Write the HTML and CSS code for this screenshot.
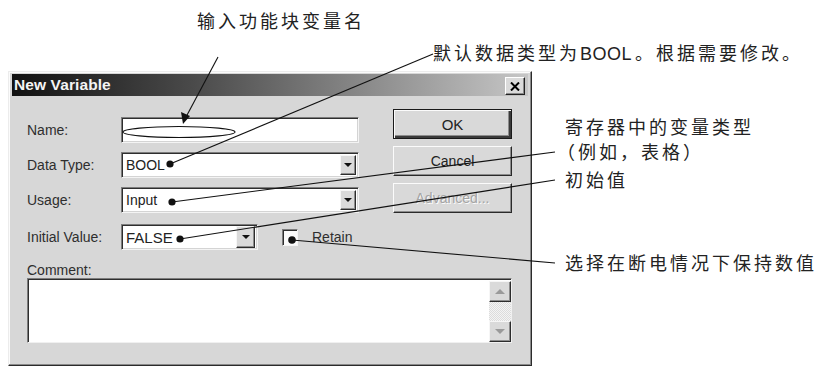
FILE: index.html
```html
<!DOCTYPE html>
<html lang="zh">
<head>
<meta charset="utf-8">
<title>New Variable</title>
<link rel="stylesheet" href="styles.css">
</head>
<body>
<div class="figure">
  <div class="callout c-name">输入功能块变量名</div>
  <div class="callout c-type">默认数据类型为<span class="latin">BOOL</span>。根据需要修改。</div>
  <div class="callout c-usage">寄存器中的变量类型<br><span class="paren">（例如，表格）</span></div>
  <div class="callout c-init">初始值</div>
  <div class="callout c-retain">选择在断电情况下保持数值</div>

  <div class="dialog">
    <div class="titlebar">
      <span class="title">New Variable</span>
      <span class="close">
        <svg width="10" height="9" viewBox="0 0 10 9"><path d="M1 0.5 L9 8.5 M9 0.5 L1 8.5" stroke="#000" stroke-width="2"/></svg>
      </span>
    </div>
    <div class="body">
      <div class="form">
        <div class="row">
          <span class="label">Name:</span>
          <div class="field wide"></div>
        </div>
        <div class="row">
          <span class="label">Data Type:</span>
          <div class="field wide combo"><span class="val">BOOL</span><span class="drop"><i class="tri"></i></span></div>
        </div>
        <div class="row">
          <span class="label">Usage:</span>
          <div class="field wide combo"><span class="val">Input</span><span class="drop"><i class="tri"></i></span></div>
        </div>
        <div class="row last">
          <span class="label">Initial Value:</span>
          <div class="field short combo"><span class="val big">FALSE</span><span class="drop"><i class="tri"></i></span></div>
          <span class="check"></span>
          <span class="check-label">Retain</span>
        </div>
      </div>
      <div class="buttons">
        <div class="btn default"><span>OK</span></div>
        <div class="btn"><span>Cancel</span></div>
        <div class="btn disabled"><span>Advanced...</span></div>
      </div>
    </div>
    <div class="comment">
      <div class="label">Comment:</div>
      <div class="textarea">
        <div class="scrollbar">
          <span class="sbtn"><i class="tri up"></i></span>
          <span class="track"></span>
          <span class="sbtn"><i class="tri dis"></i></span>
        </div>
      </div>
    </div>
  </div>

  <svg class="leaders" width="832" height="370" viewBox="0 0 832 370">
    <g stroke="#111" stroke-width="1.1" fill="none">
      <line x1="218" y1="57" x2="186" y2="117"/>
      <ellipse cx="179" cy="132" rx="56" ry="5.5"/>
      <polyline points="170,164 433,54"/>
      <line x1="172" y1="202" x2="555" y2="152"/>
      <line x1="180" y1="239" x2="555" y2="180"/>
      <line x1="292" y1="240" x2="555" y2="263"/>
    </g>
    <g fill="#111">
      <polygon points="183,124 181,112 190,116"/>
      <circle cx="170" cy="164" r="3.6"/>
      <circle cx="172" cy="202" r="3.6"/>
      <circle cx="180" cy="239" r="3.6"/>
      <circle cx="292" cy="240" r="3.8"/>
    </g>
  </svg>
</div>
</body>
</html>
```

FILE: styles.css
```css
html, body {
  margin: 0;
  padding: 0;
  background: #ffffff;
}

.figure {
  position: relative;
  width: 832px;
  height: 370px;
  overflow: hidden;
  padding-top: 71px;
  box-sizing: border-box;
}

/* Callout labels on the annotated figure */
.callout {
  position: absolute;
  font-family: "Noto Sans CJK SC", "Noto Sans", sans-serif;
  font-size: 18px;
  line-height: 25px;
  letter-spacing: 3px;
  color: #222222;
  white-space: nowrap;
}
.callout .latin {
  font-family: "Liberation Sans", Arial, sans-serif;
  letter-spacing: 0.5px;
  margin-right: 3px;
}
.c-name { left: 197px; top: 8px; }
.c-type { left: 433px; top: 40px; }
.c-usage { left: 565px; top: 114px; }
.c-usage .paren { margin-left: -8px; }
.c-init { left: 565px; top: 167px; }
.c-retain { left: 565px; top: 250px; }

.leaders {
  position: absolute;
  left: 0;
  top: 0;
  pointer-events: none;
}

/* Dialog */
.dialog {
  margin-left: 8px;
  width: 524px;
  height: 295px;
  box-sizing: border-box;
  background: #d7d7d7;
  border: 1px solid;
  border-color: #ececec #2b2b2b #2b2b2b #ececec;
  box-shadow: inset -1px -1px 0 #8a8a8a, inset 1px 1px 0 #fbfbfb;
  padding: 2px 3px 3px 3px;
  font-family: "Liberation Sans", Arial, sans-serif;
  font-size: 14px;
  color: #2e2e2e;
}

.titlebar {
  height: 22px;
  display: flex;
  align-items: center;
  justify-content: space-between;
  background: linear-gradient(to right, #121212 0%, #4a4a4a 35%, #c6c6c6 100%);
  padding: 0 2px 0 2px;
}
.title {
  font-weight: bold;
  font-size: 15.5px;
  color: #f4f4f4;
  letter-spacing: 0.1px;
}
.close {
  width: 20px;
  height: 18px;
  box-sizing: border-box;
  background: #dadada;
  border: 1px solid;
  border-color: #ffffff #222 #222 #ffffff;
  box-shadow: inset -1px -1px 0 #8a8a8a;
  display: flex;
  align-items: center;
  justify-content: center;
  margin-right: 1px;
  margin-top: 2px;
}

.body {
  display: flex;
  padding: 13px 16px 0 15px;
  gap: 34px;
}

.form {
  padding-top: 8px;
  display: flex;
  flex-direction: column;
  gap: 9px;
}
.row {
  display: flex;
  align-items: center;
  height: 26px;
}
.row.last { margin-top: 2px; height: 26px; }

.label {
  width: 94px;
  flex: none;
  line-height: 16px;
}

.field {
  height: 26px;
  box-sizing: border-box;
  background: #ffffff;
  border: 1px solid;
  border-color: #7c7c7c #f4f4f4 #f4f4f4 #7c7c7c;
  box-shadow: inset 1px 1px 0 #2e2e2e, inset -1px -1px 0 #d4d4d4;
  display: flex;
  align-items: center;
}
.field.wide { width: 238px; }
.field.short { width: 137px; }

.val {
  padding-left: 4px;
  flex: 1;
  color: #222;
  font-size: 14px;
}
.val.big { font-size: 15px; }

.drop {
  width: 16px;
  height: 20px;
  margin-right: 2px;
  box-sizing: border-box;
  background: #dadada;
  border: 1px solid;
  border-color: #f6f6f6 #2c2c2c #2c2c2c #f6f6f6;
  box-shadow: inset -1px -1px 0 #8c8c8c;
  display: flex;
  align-items: center;
  justify-content: center;
}
.field.short .drop {
  width: 19px;
  height: 22px;
}

.tri {
  display: block;
  width: 0;
  height: 0;
  border-left: 4px solid transparent;
  border-right: 4px solid transparent;
  border-top: 4px solid #111;
}
.tri.up {
  border-left-width: 5px;
  border-right-width: 5px;
  border-top: 0;
  border-bottom: 5px solid #9a9a9a;
}
.tri.dis {
  border-left-width: 5px;
  border-right-width: 5px;
  border-top: 5px solid #9a9a9a;
}

.check {
  width: 16px;
  height: 17px;
  box-sizing: border-box;
  margin-left: 24px;
  background: #fafafa;
  border: 1px solid;
  border-color: #7c7c7c #f4f4f4 #f4f4f4 #7c7c7c;
  box-shadow: inset 1px 1px 0 #2e2e2e;
}
.check-label {
  margin-left: 14px;
  color: #2e2e2e;
}

.buttons {
  display: flex;
  flex-direction: column;
  gap: 7px;
  width: 119px;
}
.btn {
  height: 30px;
  box-sizing: border-box;
  background: #d9d9d9;
  border: 1px solid;
  border-color: #fbfbfb #2a2a2a #2a2a2a #fbfbfb;
  box-shadow: inset -1px -1px 0 #8c8c8c;
  display: flex;
  align-items: center;
  justify-content: center;
  color: #222;
  font-size: 14px;
}
.btn.default {
  border: 1px solid #1a1a1a;
  box-shadow: inset 1px 1px 0 #fbfbfb, inset -2px -2px 0 #3a3a3a, inset -3px -3px 0 #8c8c8c;
}
.btn.default span { font-size: 15px; }
.btn.disabled span {
  color: #a4a4a4;
  text-shadow: 1px 1px 0 #fbfbfb;
}

.comment {
  padding: 12px 16px 0 15px;
}
.comment .label {
  width: auto;
  height: 16px;
}
.textarea {
  height: 65px;
  box-sizing: border-box;
  background: #ffffff;
  border: 1px solid;
  border-color: #7c7c7c #f0f0f0 #f0f0f0 #7c7c7c;
  box-shadow: inset 1px 1px 0 #2e2e2e;
  display: flex;
  justify-content: flex-end;
  padding: 2px 0 0 0;
}
.scrollbar {
  width: 22px;
  display: flex;
  flex-direction: column;
}
.sbtn {
  height: 21px;
  box-sizing: border-box;
  background: #dadada;
  border: 1px solid;
  border-color: #f6f6f6 #2c2c2c #2c2c2c #f6f6f6;
  box-shadow: inset -1px -1px 0 #8c8c8c;
  display: flex;
  align-items: center;
  justify-content: center;
}
.track {
  flex: 1;
  background-color: #eeeeee;
  background-image: repeating-conic-gradient(#dcdcdc 0 25%, #f4f4f4 0 50%);
  background-size: 2px 2px;
}
```
